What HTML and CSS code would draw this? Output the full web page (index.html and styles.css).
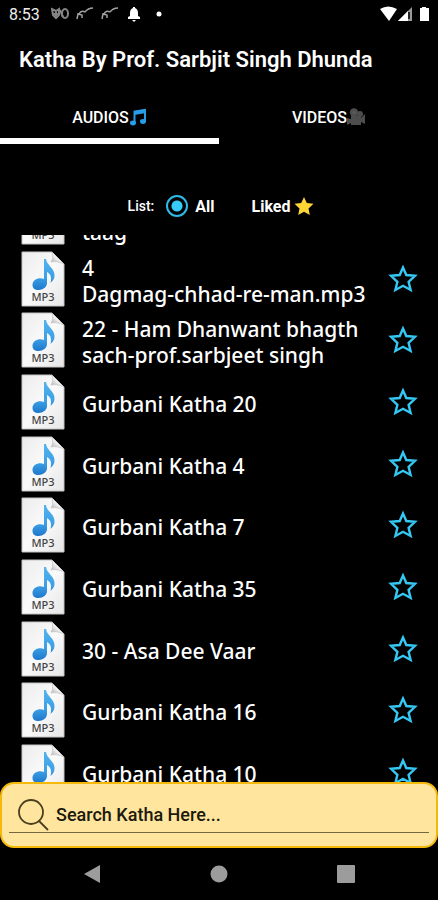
FILE: index.html
```html
<!DOCTYPE html>
<html lang="en">
<head>
<meta charset="utf-8">
<meta name="viewport" content="width=device-width, initial-scale=1">
<title>Katha By Prof. Sarbjit Singh Dhunda</title>
<link rel="stylesheet" href="styles.css">
</head>
<body>
<svg class="defs" aria-hidden="true">
  <defs>
    <linearGradient id="paper" x1="0" y1="0" x2="1" y2="1"><stop offset="0" stop-color="#ececec"/><stop offset=".5" stop-color="#fafafa"/><stop offset="1" stop-color="#e6e6e6"/></linearGradient>
    <linearGradient id="note" x1="0" y1="0" x2="0" y2="1"><stop offset="0" stop-color="#55b4ee"/><stop offset=".6" stop-color="#3ca0e6"/><stop offset="1" stop-color="#1f78cc"/></linearGradient>
    <linearGradient id="fold" x1="0" y1="1" x2="1" y2="0"><stop offset="0" stop-color="#a8a8a8"/><stop offset=".5" stop-color="#f4f4f4"/><stop offset="1" stop-color="#c4c4c4"/></linearGradient>
  </defs>
  <symbol id="file" viewBox="0 0 44 56">
    <path d="M1 1h30l12 12v42H1z" fill="url(#paper)" stroke="#c4c4c4"/>
    <path d="M31 1c1 4 1 7-1 10 4-1 9 0 13 2z" fill="url(#fold)" stroke="#bbb" stroke-width=".6"/>
    <path d="M23 8h2c1 7 9 9 8.500 17 0 3-2 5-4 7 1.500-6 0-9-3.500-11v11c0 4-4 7-8.500 7-4 0-6-2-6-5 0-5 6-8 11.500-6z" fill="url(#note)"/>
  </symbol>
  <symbol id="star" viewBox="0 0 30 30">
    <path d="M15 3.500l3.300 7.500 8.700.8-6.400 6 2 8.200L15 21.800 7.400 26l2-8.200-6.400-6 8.700-.8z" fill="none" stroke="#35c8f4" stroke-width="2.400"/>
  </symbol>
</svg>
<div class="app">
  <div class="status">
    <span class="clock">8:53</span>
    <svg class="notices" viewBox="0 0 112 16" aria-hidden="true">
      <g fill="none" stroke="#858585" stroke-width="2"><path d="M1 3l1 6 3 3 3-3V3L5 5zM2 8h6M5 4v7"/><ellipse cx="14" cy="7.500" rx="3" ry="4.500"/><path d="M9 4l3 7"/></g>
      <g fill="none" stroke="#a0a0a0" stroke-width="1.500"><path d="M26 13l1-5 4 1v3M28 8q2-4 6-2M34 6q3-4 8-4M51 13l1-5 4 1v3M53 8q2-4 6-2M59 6q3-4 8-4"/></g>
      <path d="M77 13v-2l2-1V7q0-4 3-5V1h2v1q3 1 3 5v3l2 1v2zM81 14h4l-2 2z" fill="#fff"/>
      <circle cx="108" cy="8" r="2.500" fill="#fff"/>
    </svg>
    <svg class="signals" viewBox="0 0 50 16" aria-hidden="true">
      <path d="M0 3q8-5 17 0L9 15z" fill="#fff"/>
      <path d="M18 15L32 1v14z" fill="#999"/><path d="M18 15L28 5v10z" fill="#fff"/><path d="M29 6v7" stroke="#222" stroke-width="2"/>
      <path d="M40 2h2V1h4v1h3v13h-9z" fill="#fff"/>
    </svg>
  </div>
  <h1 class="title">Katha By Prof. Sarbjit Singh Dhunda</h1>
  <div class="tabs" role="tablist">
    <button class="tab tab-active" role="tab" aria-selected="true">AUDIOS<svg class="emoji" viewBox="0 0 18 18" aria-hidden="true"><path d="M5.500 14V3.500L16 2v11" fill="none" stroke="#279de8" stroke-width="2"/><path d="M5 3l12-2v4L5 7z" fill="#279de8"/><ellipse cx="4" cy="15" rx="3" ry="2.400" fill="#279de8"/><ellipse cx="14" cy="13.500" rx="3" ry="2.400" fill="#279de8"/></svg></button>
    <button class="tab" role="tab" aria-selected="false">VIDEOS<svg class="emoji" viewBox="0 0 18 18" aria-hidden="true"><g fill="#4d4d4d"><circle cx="7" cy="4.500" r="4.200"/><circle cx="13" cy="6" r="3"/><path d="M4 8h10v9H4zM14 10l4-4v10l-4-2zM0 10l4 1v4l-4 2z"/></g><circle cx="7" cy="4.500" r="1.500" fill="#5c5c5c"/></svg></button>
  </div>
  <div class="filter" role="radiogroup" aria-labelledby="filter-name">
    <span class="filter-name" id="filter-name">List:</span>
    <label class="choice"><input type="radio" name="filter" checked>All</label>
    <label class="choice"><input type="radio" name="filter">Liked<svg class="gold" viewBox="0 0 20 20" aria-hidden="true"><path d="M10 1l2.800 6 6.700.8-5 4.600 1.300 6.600-5.800-3.300L4.200 19l1.300-6.600-5-4.600L7.200 7z" fill="#fdd535"/></svg></label>
  </div>
  <main class="viewport">
    <ul class="list">
      <li class="row"><span class="file"><svg><use href="#file"/></svg><span class="ext">MP3</span></span><span class="name">Sach Da<br>taag</span><button class="like" aria-label="Like"><svg><use href="#star"/></svg></button></li>
      <li class="row"><span class="file"><svg><use href="#file"/></svg><span class="ext">MP3</span></span><span class="name">4<br>Dagmag-chhad-re-man.mp3</span><button class="like" aria-label="Like"><svg><use href="#star"/></svg></button></li>
      <li class="row"><span class="file"><svg><use href="#file"/></svg><span class="ext">MP3</span></span><span class="name">22 - Ham Dhanwant bhagth<br>sach-prof.sarbjeet singh</span><button class="like" aria-label="Like"><svg><use href="#star"/></svg></button></li>
      <li class="row"><span class="file"><svg><use href="#file"/></svg><span class="ext">MP3</span></span><span class="name">Gurbani Katha 20</span><button class="like" aria-label="Like"><svg><use href="#star"/></svg></button></li>
      <li class="row"><span class="file"><svg><use href="#file"/></svg><span class="ext">MP3</span></span><span class="name">Gurbani Katha 4</span><button class="like" aria-label="Like"><svg><use href="#star"/></svg></button></li>
      <li class="row"><span class="file"><svg><use href="#file"/></svg><span class="ext">MP3</span></span><span class="name">Gurbani Katha 7</span><button class="like" aria-label="Like"><svg><use href="#star"/></svg></button></li>
      <li class="row"><span class="file"><svg><use href="#file"/></svg><span class="ext">MP3</span></span><span class="name">Gurbani Katha 35</span><button class="like" aria-label="Like"><svg><use href="#star"/></svg></button></li>
      <li class="row"><span class="file"><svg><use href="#file"/></svg><span class="ext">MP3</span></span><span class="name">30 - Asa Dee Vaar</span><button class="like" aria-label="Like"><svg><use href="#star"/></svg></button></li>
      <li class="row"><span class="file"><svg><use href="#file"/></svg><span class="ext">MP3</span></span><span class="name">Gurbani Katha 16</span><button class="like" aria-label="Like"><svg><use href="#star"/></svg></button></li>
      <li class="row"><span class="file"><svg><use href="#file"/></svg><span class="ext">MP3</span></span><span class="name">Gurbani Katha 10</span><button class="like" aria-label="Like"><svg><use href="#star"/></svg></button></li>
    </ul>
  </main>
  <form class="search">
    <label class="search-line">
      <svg class="lens" viewBox="0 0 32 32" fill="none" stroke="#4a401f" stroke-width="1.800" aria-hidden="true"><circle cx="13" cy="13" r="12"/><path d="M21 22l9 9"/></svg>
      <input type="search" placeholder="Search Katha Here..." aria-label="Search Katha">
    </label>
  </form>
  <nav class="nav">
    <button aria-label="Back"><svg viewBox="0 0 18 18"><path d="M17 0v18L1 9z"/></svg></button>
    <button aria-label="Home"><svg viewBox="0 0 18 18"><circle cx="9" cy="9" r="8.500"/></svg></button>
    <button aria-label="Recent apps"><svg viewBox="0 0 18 18"><rect width="18" height="18" rx="1"/></svg></button>
  </nav>
</div>
</body>
</html>
```
FILE: styles.css
```css
* { box-sizing: border-box; }
body {
  margin: 0;
  background: #000;
  color: #fff;
  font-family: Roboto, "Liberation Sans", sans-serif;
}
button {
  padding: 0;
  border: 0;
  background: none;
  color: inherit;
  font: inherit;
}
svg { display: block; }
.defs { position: absolute; width: 0; height: 0; }
.app {
  display: flex;
  flex-direction: column;
  height: 100vh;
  overflow: hidden;
}
.status {
  display: flex;
  align-items: center;
  height: 28px;
  padding: 0 8px 0 9px;
  font-size: 16px;
}
.clock { width: 42px; color: #eee; }
.notices { width: 112px; height: 16px; }
.signals { width: 50px; height: 16px; margin-left: auto; }
.title {
  margin: 0;
  padding: 0 19px;
  font-size: 22px;
  font-weight: 600;
  line-height: 64px;
  white-space: nowrap;
}
.tabs { display: flex; height: 52px; }
.tab {
  display: flex;
  flex: 1;
  align-items: center;
  justify-content: center;
  padding-top: 4px;
  border-bottom: 6px solid transparent;
  font-size: 16px;
  font-weight: 500;
}
.tab-active { border-bottom-color: #fff; }
.emoji { width: 18px; height: 18px; }
.filter {
  display: flex;
  align-items: center;
  justify-content: center;
  height: 91px;
  padding: 33px 0 0 4px;
  font-size: 16px;
  font-weight: 700;
}
.filter-name { margin-right: 12px; font-size: 14px; font-weight: 500; }
.choice { display: flex; align-items: center; }
.choice + .choice { margin-left: 8px; }
.choice input {
  appearance: none;
  width: 22px;
  height: 22px;
  margin: 0 7px 0 0;
  border: 2px solid #000;
  border-radius: 50%;
}
.choice input:checked {
  border-color: #2fb9e6;
  background: radial-gradient(circle, #35ccf8 0 5px, #000 6px);
}
.gold { width: 20px; height: 20px; margin-left: 4px; }
.viewport { flex: 1; min-height: 0; overflow: hidden; display: flex; }
.list {
  display: grid;
  flex: 1;
  grid-template-rows: repeat(10, minmax(0, 1fr));
  margin: -49px 0 -21px;
  padding: 0 20px 0 21px;
  list-style: none;
}
.row { display: flex; align-items: center; }
.file { position: relative; width: 44px; height: 56px; }
.file > svg { width: 44px; height: 56px; }
.ext {
  position: absolute;
  bottom: 3px;
  width: 100%;
  color: #444;
  font: 500 11px/14px "Noto Sans", sans-serif;
  text-align: center;
}
.name {
  flex: 1;
  margin-left: 17px;
  padding-top: 4px;
  font: 500 21px/26px "Noto Sans", sans-serif;
  white-space: nowrap;
}
.like svg { width: 30px; height: 30px; }
.search {
  height: 66px;
  padding: 8px 7px;
  border: 2px solid #f5b90c;
  border-radius: 14px;
  background: #ffe59e;
}
.search-line {
  display: flex;
  align-items: center;
  height: 41px;
  padding-top: 6px;
  padding-left: 9px;
  border-bottom: 1px solid #73683f;
}
.lens { width: 32px; height: 32px; }
.search input {
  flex: 1;
  min-width: 0;
  margin-left: 6px;
  padding: 0;
  border: 0;
  outline: 0;
  background: none;
  color: #1c190e;
  font: 500 18px/24px Roboto, sans-serif;
}
.search input::placeholder { color: #1c190e; opacity: 1; }
.nav {
  display: flex;
  align-items: center;
  justify-content: space-between;
  height: 52px;
  padding: 0 83px;
}
.nav svg { width: 18px; height: 18px; fill: #9c9c9c; }
```
